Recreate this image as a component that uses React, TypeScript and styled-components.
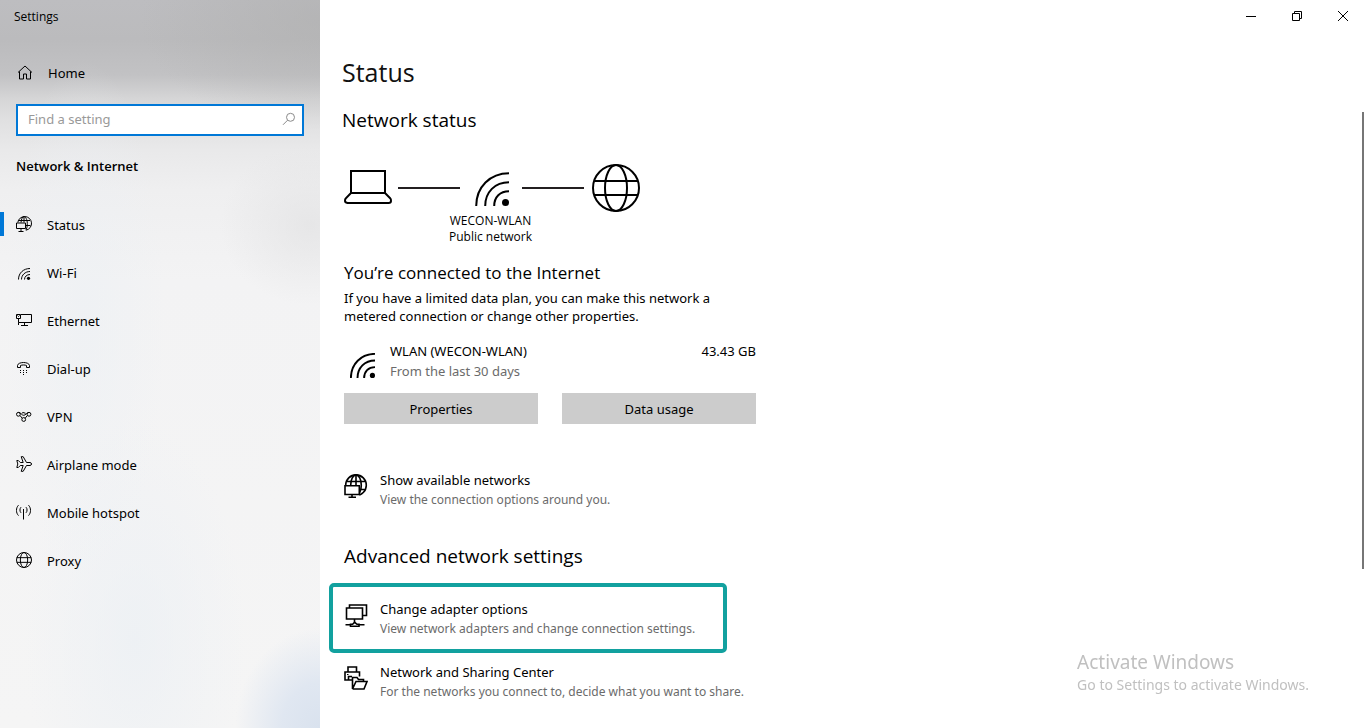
import React from "react";
import styled, { createGlobalStyle } from "styled-components";

const GlobalStyle = createGlobalStyle`
  * { box-sizing: border-box; }
  body {
    margin: 0;
    background: #fff;
    color: #000;
    font-family: "Noto Sans", "Open Sans", sans-serif;
    font-size: 13px;
    line-height: 20px;
  }
  h1, h2, h3, p, ul { margin: 0; padding: 0; font-weight: 400; }
  h1, h2, h3, figcaption { font-family: "Open Sans", "Noto Sans", sans-serif; }
  ul { list-style: none; }
  a { color: inherit; text-decoration: none; }
  button, input { font: inherit; color: inherit; }
  svg { display: block; flex: none; }
`;

const Window = styled.div`
  display: flex;
  min-height: 100vh;
`;

const Sidebar = styled.aside`
  flex: none;
  width: 320px;
  background:
    radial-gradient(ellipse 85px 100px at 100% 100%, #d9e2ee 0%, #e0e7f1 45%, rgba(240, 243, 247, 0) 100%),
    radial-gradient(ellipse 90px 80px at 310px 225px, rgba(226, 226, 227, 0.7), rgba(226, 226, 227, 0) 100%),
    radial-gradient(ellipse 80px 260px at 85px 320px, rgba(236, 240, 244, 0.6), rgba(236, 240, 244, 0) 100%),
    radial-gradient(ellipse 110px 220px at 135px 640px, rgba(236, 240, 244, 0.8), rgba(236, 240, 244, 0) 100%),
    radial-gradient(ellipse 180px 110px at 320px 20px, rgba(176, 176, 176, 0.6), rgba(176, 176, 176, 0) 100%),
    linear-gradient(to bottom, #bdbdc0 0, #bbbbbd 40px, #c2c2c4 75px, #d5d5d6 98px, #e0e0e1 120px, #e9e9ea 150px, #efeff0 190px, #f3f3f4 280px, #f5f5f5 100%);
`;

const AppTitle = styled.div`
  height: 32px;
  padding: 7px 14px;
  font-family: "Open Sans", "Noto Sans", sans-serif;
  font-size: 12px;
  line-height: 20px;
`;

const HomeLink = styled.a`
  display: flex;
  align-items: center;
  gap: 15px;
  height: 48px;
  margin-top: 17px;
  padding-left: 17px;
`;

const SearchBox = styled.label`
  display: flex;
  align-items: center;
  height: 32px;
  margin: 7px 16px 0;
  padding: 0 6px 2px 10px;
  border: 2px solid #0078d7;
  background: #fff;
`;

const SearchInput = styled.input`
  flex: 1;
  min-width: 0;
  padding: 0;
  border: 0;
  outline: 0;
  background: transparent;
  &::placeholder { color: #999; opacity: 1; }
`;

const SectionName = styled.h2`
  margin: 20px 16px 25px;
  font-size: 13px;
  font-weight: 600;
  line-height: 20px;
`;

const NavLink = styled.a<{ $active?: boolean }>`
  display: flex;
  align-items: center;
  gap: 15px;
  height: 48px;
  &::before {
    content: "";
    width: 4px;
    height: 24px;
    margin: 0 -3px 2px 0;
    background: ${(p) => (p.$active ? "#0078d7" : "transparent")};
  }
  svg { margin-bottom: 2px; }
`;

const Main = styled.main`
  position: relative;
  flex: 1;
  min-width: 0;
`;

const WindowControls = styled.div`
  display: flex;
  justify-content: flex-end;
  height: 32px;
`;

const ControlButton = styled.button`
  display: flex;
  align-items: center;
  justify-content: center;
  width: 46px;
  padding: 0;
  border: 0;
  background: transparent;
`;

const Content = styled.div`
  max-width: 460px;
  padding: 22px 0 0 24px;
`;

const TitleBlock = styled.header`
  margin-left: -2px;
`;

const PageTitle = styled.h1`
  color: #111;
  font-size: 25px;
  line-height: 36px;
`;

const Heading = styled.h2<{ $top: number }>`
  margin-top: ${(p) => p.$top}px;
  font-size: 19px;
  line-height: 28px;
`;

const Diagram = styled.figure`
  width: 296px;
  margin: 30px 0 0;
`;

const DiagramRow = styled.div`
  display: flex;
  align-items: center;
  & > svg:last-child { margin-left: auto; }
`;

const Wire = styled.span`
  width: 62px;
  height: 2px;
  background: #231f20;
  svg + & { margin-left: 6px; }
`;

const Signal = styled.span`
  display: flex;
  justify-content: center;
  width: 62px;
  padding: 2px 0 0 2px;
`;

const Caption = styled.figcaption`
  padding: 1px 3px 0 0;
  font-size: 12px;
  line-height: 16px;
  text-align: center;
`;

const Connected = styled.h3`
  margin-top: 16px;
  font-size: 17px;
  line-height: 24px;
`;

const Hint = styled.p`
  margin-top: 4px;
  line-height: 18px;
`;

const Usage = styled.div`
  display: flex;
  width: 412px;
  margin-top: 16px;
  svg { margin: 12px 15px 0 6px; }
`;

const UsageText = styled.div`
  flex: 1;
`;

const Muted = styled.div`
  color: #6b6b6b;
`;

const Buttons = styled.div`
  display: grid;
  grid-template-columns: 1fr 1fr;
  gap: 24px;
  width: 412px;
  margin-top: 12px;
`;

const Button = styled.button`
  height: 31px;
  padding: 0;
  border: 0;
  background: #ccc;
`;

const Option = styled.a<{ $highlight?: boolean; $top: number }>`
  display: flex;
  align-items: flex-start;
  gap: 12px;
  width: 398px;
  margin-top: ${(p) => p.$top}px;
  margin-left: -15px;
  padding: ${(p) => (p.$highlight ? "13px 11px 11px" : "0 11px")};
  border: solid ${(p) => (p.$highlight ? "#12a19f" : "transparent")};
  border-width: ${(p) => (p.$highlight ? "4px" : "0 4px")};
  border-radius: 5px;
  line-height: 19px;
  white-space: nowrap;
  svg { margin-top: 3px; }
  ${Muted} { font-size: 12px; }
`;

const ScrollThumb = styled.div`
  position: absolute;
  top: 112px;
  right: 2px;
  width: 2px;
  height: 457px;
  background: #767676;
`;

const Watermark = styled.div`
  position: fixed;
  right: 57px;
  bottom: 33px;
  color: #c0c0c0;
  font-size: 14px;
  line-height: 20px;
  strong {
    display: block;
    font-size: 19px;
    font-weight: 400;
    line-height: 26px;
  }
`;

type IconProps = { w: number; h?: number; sw?: number; children: React.ReactNode };
const Icon = ({ w, h = w, sw = 1, children }: IconProps) => (
  <svg width={w} height={h} viewBox={`0 0 ${w} ${h}`} fill="none" stroke="#000" strokeWidth={sw} aria-hidden="true">
    {children}
  </svg>
);

const HomeIcon = () => (
  <Icon w={16}>
    <path d="M1 7.500 8 1 15 7.500M2.500 6.500V14H6.500V9H9.500V14H13.500V6.500" />
  </Icon>
);

const SearchIcon = () => (
  <svg width="14" height="14" viewBox="0 0 14 14" fill="none" stroke="#8a8a8a" aria-hidden="true">
    <circle cx="8.5" cy="5.3" r="4" />
    <path d="M5.6 8.2 1 12.8" />
  </svg>
);

const StatusIcon = () => (
  <Icon w={16}>
    <path d="M1.800 6.500A6.900 6.900 0 1 1 10 14.200M5 6.500C5.300 3 6.500.6 8 .6S11.300 3.500 11.300 7.500 10.500 13 9.800 14.200M8 .6V6.500M2.500 4.500H14M10 9.500H14.500" />
    <path d="M.5 7H9.500V12.500H.5ZM5 12.500V15.500M2.500 15.500H7.500" />
  </Icon>
);

const WifiIcon = () => (
  <Icon w={16}>
    <path d="M2.500 15.500C2.500 9 7.500 4.500 14 4.500M5.500 15.500C5.500 11 9.200 7.500 14 7.500M8.500 15.500C8.500 12.600 10.900 10.500 14 10.500" />
    <circle cx="12.500" cy="14.300" r="1.600" fill="#000" stroke="none" />
  </Icon>
);

const EthernetIcon = () => (
  <Icon w={16}>
    <path d="M5 2.500H15.500V10.500H2.500V6.500M8.500 10.500V13.500M5 13.500H12M.5 2.500H4.500V6.500H.5ZM1.500 3.500 2.500 4.500 3.500 3.500" />
    <path d="M2.500 10.500V13" />
  </Icon>
);

const DialIcon = () => (
  <Icon w={16}>
    <path d="M1.500 7.500V5.500C2 1.500 13 1.500 13.500 5.500V7.500H10.500V5.500C9 4.800 6 4.800 4.500 5.500V7.500Z" />
    <path stroke="none" fill="#000" d="M4 10h1v1H4zM7 10h1v1H7zM10 10h1v1h-1zM4 12h1v1H4zM7 12h1v1H7zM10 12h1v1h-1zM7 14h1v1H7z" />
  </Icon>
);

const VpnIcon = () => (
  <Icon w={16}>
    <circle cx="2.400" cy="6.300" r="1.900" />
    <circle cx="13" cy="6.300" r="1.900" />
    <circle cx="7.700" cy="11.500" r="1.900" />
    <path d="M2.400 4.400C5 4.400 5.500 7.300 7.700 7.300S10.500 4.400 13 4.400M4 7.500 6.200 10.200M11.300 7.500 9.200 10.200M5.800 5.300 7 4.500 9.600 5.300" />
  </Icon>
);

const PlaneIcon = () => (
  <Icon w={16}>
    <path d="M.8 4.500H2.300L4.300 6.500H7.200L5.200.7H7.200L10.500 6.500H14Q15.500 6.700 15.500 8T14 9.500H10.500L7.200 15.300H5.200L7.200 9.500H4.300L2.300 11.500H.8L1.800 8Z" />
  </Icon>
);

const HotspotIcon = () => (
  <Icon w={16}>
    <path d="M7.500 5V15.500M5 3.200C3.600 4.700 3.600 7.300 5 8.800M10 3.200C11.400 4.700 11.400 7.300 10 8.800M2.500 1.200C-.2 3.900-.2 8.900 2.500 11.600M12.500 1.200C15.200 3.900 15.200 8.900 12.500 11.600" />
  </Icon>
);

const GlobeIcon = ({ size, sw }: { size: number; sw: number }) => (
  <svg width={size} height={size} viewBox="0 0 48 48" fill="none" stroke="#000" strokeWidth={sw} aria-hidden="true">
    <circle cx="24" cy="24" r={24 - sw / 2} />
    <ellipse cx="24" cy="24" rx="11" ry={24 - sw / 2} />
    <path d="M2.500 17H45.500M2.500 31H45.500" />
  </svg>
);

const LaptopIcon = () => (
  <Icon w={48} sw={2}>
    <path d="M7 29V7H41V29ZM7 29 1.600 34.500Q1 35.500 1 37T3.500 39H44.500Q47 39 47 37T46.400 34.500L41 29" />
  </Icon>
);

const BigWifiIcon = ({ size }: { size: number }) => (
  <svg width={size} height={size} viewBox="0 0 34 34" fill="none" stroke="#000" strokeWidth={size > 30 ? 2 : 2.6} aria-hidden="true">
    <path d="M1.200 34C1.200 15 15 1.200 34 1.200M10.200 34C10.200 20 20 10.200 34 10.200M19.200 34C19.200 25 25 19.200 34 19.200" />
    <circle cx="30.500" cy="30.500" r="3.500" fill="#000" stroke="none" />
  </svg>
);

const NetworksIcon = () => (
  <Icon w={24} sw={1.6}>
    <circle cx="12" cy="11.200" r="10.300" />
    <ellipse cx="12" cy="11.200" rx="5.300" ry="10.300" />
    <path d="M12 1V12M2.500 7.500H21.500M15 15.500H21.500" />
    <path d="M0 11H15.500V24H0Z" fill="#fff" stroke="none" />
    <path d="M1 11.800H15.300V20.500H1ZM8 20.500V23M4.500 23.200H12" />
  </Icon>
);

const AdapterIcon = () => (
  <Icon w={24} sw={1.6}>
    <path d="M2.500 5H18.500V16H2.500ZM5.500 5V2H22.500V12.500H18.500M10.500 16V20M1.500 21.800H6.500M15 21.800H20.500" />
    <path d="M6.500 23.200V21.300H8.500L10.700 19.300 13 21.300H15V23.200Z" />
  </Icon>
);

const SharingIcon = () => (
  <Icon w={24} sw={1.6}>
    <path d="M8 14H1V6H15.500V10.500M4 6V1H12.500V6M4.500 14V10.500H8" />
    <path d="M8.500 23V11.500H13L14.500 13.500H19.500V15.500M8.500 23 12 15.500H23L20 23H8.500" />
    <path d="M3 8.500H4.500" strokeWidth="1" />
  </Icon>
);

const navItems = [
  { label: "Status", icon: <StatusIcon />, active: true },
  { label: "Wi-Fi", icon: <WifiIcon /> },
  { label: "Ethernet", icon: <EthernetIcon /> },
  { label: "Dial-up", icon: <DialIcon /> },
  { label: "VPN", icon: <VpnIcon /> },
  { label: "Airplane mode", icon: <PlaneIcon /> },
  { label: "Mobile hotspot", icon: <HotspotIcon /> },
  { label: "Proxy", icon: <GlobeIcon size={16} sw={3} /> },
];

export default function App() {
  return (
    <Window>
      <GlobalStyle />
      <Sidebar>
        <AppTitle>Settings</AppTitle>
        <HomeLink href="#home">
          <HomeIcon />
          Home
        </HomeLink>
        <SearchBox>
          <SearchInput type="text" placeholder="Find a setting" aria-label="Find a setting" />
          <SearchIcon />
        </SearchBox>
        <SectionName>Network &amp; Internet</SectionName>
        <nav>
          <ul>
            {navItems.map((item) => (
              <li key={item.label}>
                <NavLink href="#" $active={item.active}>
                  {item.icon}
                  {item.label}
                </NavLink>
              </li>
            ))}
          </ul>
        </nav>
      </Sidebar>
      <Main>
        <WindowControls>
          <ControlButton aria-label="Minimize">
            <Icon w={10}><path d="M0 5.500H10" /></Icon>
          </ControlButton>
          <ControlButton aria-label="Restore">
            <Icon w={10}><path d="M.5 2.500H7.500V9.500H.5ZM2.500 2.500V.5H9.500V7.500H7.500" /></Icon>
          </ControlButton>
          <ControlButton aria-label="Close">
            <Icon w={10}><path d="M0 0 10 10M10 0 0 10" /></Icon>
          </ControlButton>
        </WindowControls>
        <Content>
          <TitleBlock>
            <PageTitle>Status</PageTitle>
            <Heading $top={16}>Network status</Heading>
          </TitleBlock>
          <Diagram>
            <DiagramRow>
              <LaptopIcon />
              <Wire />
              <Signal>
                <BigWifiIcon size={34} />
              </Signal>
              <Wire />
              <GlobeIcon size={48} sw={2} />
            </DiagramRow>
            <Caption>
              WECON-WLAN
              <br />
              Public network
            </Caption>
          </Diagram>
          <Connected>You’re connected to the Internet</Connected>
          <Hint>
            If you have a limited data plan, you can make this network a
            <br />
            metered connection or change other properties.
          </Hint>
          <Usage>
            <BigWifiIcon size={25} />
            <UsageText>
              WLAN (WECON-WLAN)
              <Muted>From the last 30 days</Muted>
            </UsageText>
            <span>43.43 GB</span>
          </Usage>
          <Buttons>
            <Button>Properties</Button>
            <Button>Data usage</Button>
          </Buttons>
          <Option href="#networks" $top={47}>
            <NetworksIcon />
            <div>
              Show available networks
              <Muted>View the connection options around you.</Muted>
            </div>
          </Option>
          <Heading $top={33}>Advanced network settings</Heading>
          <Option href="#adapters" $top={13} $highlight>
            <AdapterIcon />
            <div>
              Change adapter options
              <Muted>View network adapters and change connection settings.</Muted>
            </div>
          </Option>
          <Option href="#sharing" $top={10}>
            <SharingIcon />
            <div>
              Network and Sharing Center
              <Muted>For the networks you connect to, decide what you want to share.</Muted>
            </div>
          </Option>
        </Content>
        <ScrollThumb />
        <Watermark>
          <strong>Activate Windows</strong>
          Go to Settings to activate Windows.
        </Watermark>
      </Main>
    </Window>
  );
}
